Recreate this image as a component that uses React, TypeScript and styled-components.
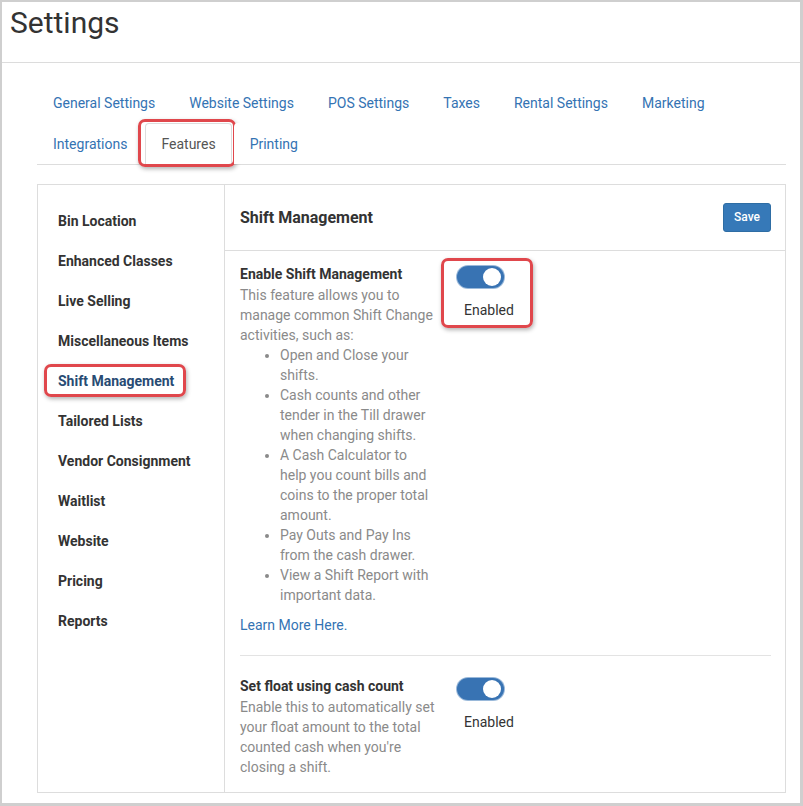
import React from "react";
import styled, { createGlobalStyle } from "styled-components";

const GlobalStyle = createGlobalStyle`
  html, body { margin: 0; padding: 0; background: #fff; }
  body { font-family: Roboto, "Liberation Sans", Arial, sans-serif; color: #333; }
  * { box-sizing: border-box; }
`;

const Frame = styled.div`
  width: 803px;
  height: 806px;
  border-style: solid;
  border-color: #cfcfcf;
  border-width: 2px 3px 3px 2px;
  background: #fff;
  display: flex;
  flex-direction: column;
  overflow: hidden;
`;

const PageHeader = styled.header`
  height: 61px;
  border-bottom: 1px solid #dcdcdc;
  padding: 3px 0 0 8px;
`;

const Title = styled.h1`
  margin: 0;
  font-size: 30px;
  line-height: 36px;
  font-weight: 400;
  color: #333;
`;

const Body = styled.main`
  flex: 1;
  display: flex;
  flex-direction: column;
  padding: 19px 14px 10px 35px;
`;

const TabList = styled.ul`
  list-style: none;
  margin: 0;
  padding: 0;
  display: flex;
  flex-wrap: wrap;
  border-bottom: 1px solid #dddddd;
`;

const TabItem = styled.li<{ $active?: boolean }>`
  position: relative;
  margin-right: 2px;
  margin-bottom: ${(p) => (p.$active ? "-1px" : "0")};
`;

const TabLink = styled.a<{ $active?: boolean }>`
  display: block;
  padding: 10px 15px;
  font-size: 14px;
  line-height: 20px;
  text-decoration: none;
  cursor: pointer;
  border: 1px solid ${(p) => (p.$active ? "#dddddd" : "transparent")};
  border-bottom: ${(p) => (p.$active ? "1px solid #fff" : "0")};
  border-radius: 4px 4px 0 0;
  background: #fff;
  color: ${(p) => (p.$active ? "#555" : "#3473b3")};
`;

const Highlight = styled.span<{ $t: number; $r: number; $b: number; $l: number }>`
  position: absolute;
  top: ${(p) => p.$t}px;
  right: ${(p) => p.$r}px;
  bottom: ${(p) => p.$b}px;
  left: ${(p) => p.$l}px;
  border: 3px solid #e0474c;
  border-radius: 7px;
  box-shadow: 1px 2px 4px rgba(0, 0, 0, 0.3);
  pointer-events: none;
`;

const Card = styled.section`
  margin-top: 19px;
  flex: 1;
  display: grid;
  grid-template-columns: 187px 1fr;
  border: 1px solid #dddddd;
`;

const Sidebar = styled.ul`
  list-style: none;
  margin: 0;
  padding: 16px 0 0 20px;
  border-right: 1px solid #dddddd;
`;

const SideItem = styled.li<{ $active?: boolean }>`
  padding: 10px 0;
  font-size: 14px;
  line-height: 20px;
  font-weight: 700;
  color: ${(p) => (p.$active ? "#284b73" : "#333")};
`;

const SideLabel = styled.span`
  position: relative;
  display: inline-block;
`;

const Panel = styled.div`
  display: flex;
  flex-direction: column;
`;

const PanelHeader = styled.div`
  height: 66px;
  border-bottom: 1px solid #dddddd;
  display: flex;
  align-items: center;
  justify-content: space-between;
  padding: 0 14px 0 15px;
`;

const PanelTitle = styled.h2`
  margin: 0;
  font-size: 16px;
  font-weight: 700;
  color: #333;
`;

const SaveButton = styled.button`
  width: 48px;
  height: 29px;
  border: 1px solid #2e6da4;
  border-radius: 3px;
  background: #3679b8;
  color: #fff;
  font-family: Roboto, "Liberation Sans", Arial, sans-serif;
  font-size: 12px;
  font-weight: 500;
  padding: 0;
  margin-top: -1px;
`;

const PanelBody = styled.div`
  padding: 13px 14px 15px 15px;
`;

const FeatureRow = styled.div`
  display: flex;
  align-items: flex-start;
`;

const FeatureText = styled.div`
  width: 195px;
  font-size: 14px;
  line-height: 20px;
`;

const FeatureTitle = styled.div`
  font-weight: 700;
  color: #333;
  margin-bottom: 1px;
`;

const Desc = styled.div`
  color: #8a8a8a;
`;

const BulletList = styled.ul`
  margin: 0 0 10px;
  padding-left: 40px;
  color: #8a8a8a;
`;

const LearnLink = styled.a`
  color: #3473b3;
  text-decoration: none;
`;

const ToggleBlock = styled.div`
  position: relative;
  margin-left: 22px;
  margin-top: 2px;
  width: 57px;
`;

const Track = styled.div`
  width: 47px;
  height: 22px;
  border-radius: 11px;
  background: #3873b3;
  box-shadow: 0 0 0 1px #9ab9da;
  display: flex;
  align-items: center;
  justify-content: flex-end;
  padding-right: 3px;
`;

const Knob = styled.div`
  width: 18px;
  height: 18px;
  border-radius: 50%;
  background: #fff;
`;

const ToggleLabel = styled.div`
  margin-top: 12px;
  padding-left: 7px;
  font-size: 14px;
  line-height: 20px;
  color: #333;
`;

const Divider = styled.hr`
  margin: 20px 0;
  border: 0;
  border-top: 1px solid #e3e3e3;
`;

const tabs = [
  "General Settings",
  "Website Settings",
  "POS Settings",
  "Taxes",
  "Rental Settings",
  "Marketing",
  "Integrations",
  "Features",
  "Printing",
];

const sideItems = [
  "Bin Location",
  "Enhanced Classes",
  "Live Selling",
  "Miscellaneous Items",
  "Shift Management",
  "Tailored Lists",
  "Vendor Consignment",
  "Waitlist",
  "Website",
  "Pricing",
  "Reports",
];

const Toggle: React.FC<{ highlighted?: boolean }> = ({ highlighted }) => (
  <ToggleBlock>
    <Track>
      <Knob />
    </Track>
    <ToggleLabel>Enabled</ToggleLabel>
    {highlighted && <Highlight $t={-8} $r={-19} $b={-8} $l={-16} />}
  </ToggleBlock>
);

export default function App() {
  return (
    <>
      <GlobalStyle />
      <Frame>
        <PageHeader>
          <Title>Settings</Title>
        </PageHeader>
        <Body>
          <TabList>
            {tabs.map((t) => {
              const active = t === "Features";
              return (
                <TabItem key={t} $active={active}>
                  <TabLink $active={active}>{t}</TabLink>
                  {active && <Highlight $t={-4} $r={-4} $b={-2} $l={-7} />}
                </TabItem>
              );
            })}
          </TabList>
          <Card>
            <Sidebar>
              {sideItems.map((s) => {
                const active = s === "Shift Management";
                return (
                  <SideItem key={s} $active={active}>
                    <SideLabel>
                      {s}
                      {active && <Highlight $t={-7} $r={-12} $b={-6} $l={-14} />}
                    </SideLabel>
                  </SideItem>
                );
              })}
            </Sidebar>
            <Panel>
              <PanelHeader>
                <PanelTitle>Shift Management</PanelTitle>
                <SaveButton>Save</SaveButton>
              </PanelHeader>
              <PanelBody>
                <FeatureRow>
                  <FeatureText>
                    <FeatureTitle>Enable Shift Management</FeatureTitle>
                    <Desc>
                      This feature allows you to manage common Shift Change activities, such as:
                    </Desc>
                    <BulletList>
                      <li>Open and Close your shifts.</li>
                      <li>Cash counts and other tender in the Till drawer when changing shifts.</li>
                      <li>A Cash Calculator to help you count bills and coins to the proper total amount.</li>
                      <li>Pay Outs and Pay Ins from the cash drawer.</li>
                      <li>View a Shift Report with important data.</li>
                    </BulletList>
                    <LearnLink>Learn More Here.</LearnLink>
                  </FeatureText>
                  <Toggle highlighted />
                </FeatureRow>
                <Divider />
                <FeatureRow>
                  <FeatureText>
                    <FeatureTitle>Set float using cash count</FeatureTitle>
                    <Desc>
                      Enable this to automatically set your float amount to the total counted cash when you're closing a shift.
                    </Desc>
                  </FeatureText>
                  <Toggle />
                </FeatureRow>
              </PanelBody>
            </Panel>
          </Card>
        </Body>
      </Frame>
    </>
  );
}
